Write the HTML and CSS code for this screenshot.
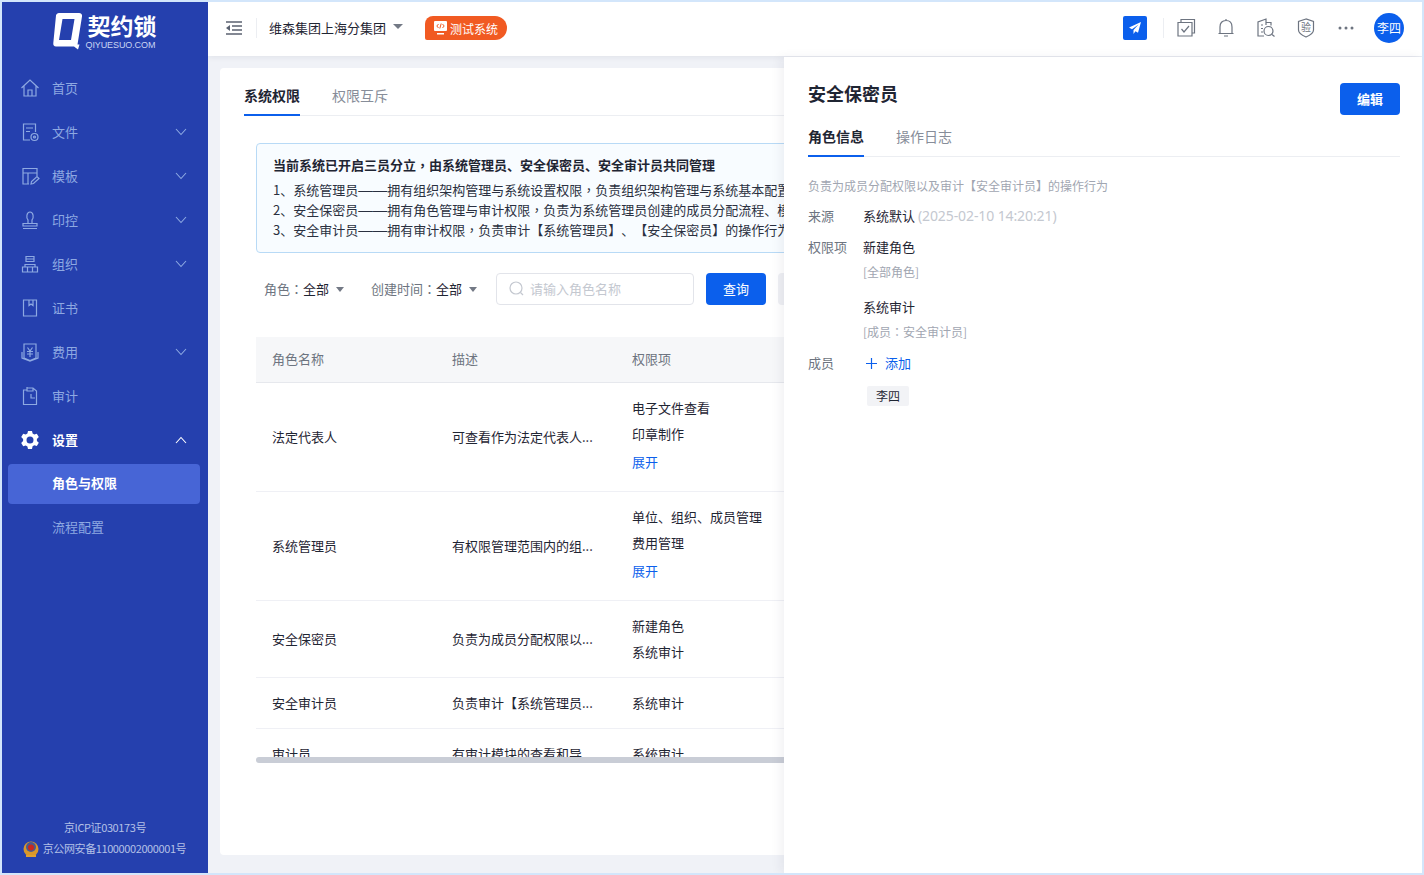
FILE: index.html
```html
<!doctype html>
<html>

<head>
  <meta charset="utf-8">
  <title>契约锁</title>
  <link rel="stylesheet" href="styles.css">
</head>

<body>
  <div class="app">
    <aside class="sidebar">
      <div class="logo">
        <svg class="logo-q" width="30" height="38" viewBox="0 0 30 38">
          <path fill="#fff" fill-rule="evenodd" d="M6 1h20c2 0 3.500 1.500 3 3.500l-4.500 28h2l-1.500 5-4-3H3c-2 0-3-1.500-2.700-3.500L3 3.500C3.300 2 4.500 1 6 1zm3.500 6L6 28h12l3.500-21z" />
        </svg>
        <div class="logo-text">
          <div class="logo-cn">契约锁</div>
          <div class="logo-en">QIYUESUO.COM</div>
        </div>
      </div>
      <nav class="nav">
        <a class="nav-item">
          <svg class="nav-icon" viewBox="0 0 20 20"><path d="M1.500 10 10 2l8.500 8M4 8v10h12V8M8 18v-6h4v6" /></svg>
          <span>首页</span>
        </a>
        <a class="nav-item">
          <svg class="nav-icon" viewBox="0 0 20 20"><path d="M10 18H3.500V2h12v8M6 6h7M6 9.500h4" /><circle cx="14.500" cy="15" r="3.500" /><circle cx="14.500" cy="15" r="1" /></svg>
          <span>文件</span>
          <svg class="chev" viewBox="0 0 12 8"><path d="M1 1l5 5.500L11 1" /></svg>
        </a>
        <a class="nav-item">
          <svg class="nav-icon" viewBox="0 0 20 20"><path d="M9 18H3V2.500h14V10M3 7h14M8 7v11M11 18l.5-2.500 5.500-5 2 2-5.500 5z" /></svg>
          <span>模板</span>
          <svg class="chev" viewBox="0 0 12 8"><path d="M1 1l5 5.500L11 1" /></svg>
        </a>
        <a class="nav-item">
          <svg class="nav-icon" viewBox="0 0 20 20"><path d="M3 13.500h14V16H3zM3 18.500h14M8 13.500V10C6 8 6.500 2 10 2s4 6 2 8v3.500" /></svg>
          <span>印控</span>
          <svg class="chev" viewBox="0 0 12 8"><path d="M1 1l5 5.500L11 1" /></svg>
        </a>
        <a class="nav-item">
          <svg class="nav-icon" viewBox="0 0 20 20"><path d="M6 2.500h8v5H6zM6 5h8M2.500 13h5v5h-5zM12.500 13h5v5h-5zM7.500 13h5v5h-5zM5 13v-2.500h10V13" /></svg>
          <span>组织</span>
          <svg class="chev" viewBox="0 0 12 8"><path d="M1 1l5 5.500L11 1" /></svg>
        </a>
        <a class="nav-item">
          <svg class="nav-icon" viewBox="0 0 20 20"><path d="M3.500 2h13v16h-13zM9 2v5.500l2-1.500 2 1.500V2" /></svg>
          <span>证书</span>
        </a>
        <a class="nav-item">
          <svg class="nav-icon" viewBox="0 0 20 20"><path d="M4 2h12v14l-6 2.500L4 16zM2 10v6l8 3 8-3v-6M7.500 5.500 10 9l2.500-3.500M7 9.500h6M7 12h6M10 9v6" /></svg>
          <span>费用</span>
          <svg class="chev" viewBox="0 0 12 8"><path d="M1 1l5 5.500L11 1" /></svg>
        </a>
        <a class="nav-item">
          <svg class="nav-icon" viewBox="0 0 20 20"><path d="M7 4H3.500v14.500h13V5L13 2H7zM7 1v4h6V2M11 8v4h4" /></svg>
          <span>审计</span>
        </a>
        <a class="nav-item is-open">
          <svg class="nav-icon gear" viewBox="0 0 20 20"><path fill-rule="evenodd" d="M8 1h4l.6 2.500 1.700 1 2.500-.8 2 3.400-1.900 1.800v2l1.900 1.800-2 3.400-2.500-.8-1.700 1L12 19H8l-.6-2.500-1.700-1-2.500.8-2-3.400 1.900-1.800V9L1.200 7.100l2-3.400 2.500.8 1.700-1zM10 6.500a3.500 3.500 0 1 0 0 7 3.500 3.500 0 0 0 0-7z" /></svg>
          <span>设置</span>
          <svg class="chev" viewBox="0 0 12 8"><path d="M1 7l5-5.500L11 7" /></svg>
        </a>
        <a class="sub-item is-active">角色与权限</a>
        <a class="sub-item">流程配置</a>
      </nav>
      <div class="side-foot">
        <div>京ICP证030173号</div>
        <div class="police">
          <svg width="16" height="18" viewBox="0 0 16 18">
            <circle cx="8" cy="9" r="7.500" fill="#d9972b" />
            <circle cx="8" cy="7" r="5" fill="#4a5a8c" />
            <circle cx="8" cy="7.500" r="3" fill="#c8281e" />
            <path d="M3 15h10v2H3z" fill="#e0a030" />
          </svg>
          <span>京公网安备11000002000001号</span>
        </div>
      </div>
    </aside>

    <div class="main">
      <header class="topbar">
        <svg class="menu-icon" width="16" height="14" viewBox="0 0 16 14"><path d="M0 1h16M6 5h10M6 9h10M0 13h16" /><path class="fill" d="M4 4v6L0 7z" /></svg>
        <span class="top-sep"></span>
        <span class="org">维森集团上海分集团</span>
        <span class="caret caret-dark"></span>
        <span class="env-badge">
          <svg width="13" height="14" viewBox="0 0 13 14"><path fill="#fff" d="M1 0h11a1 1 0 0 1 1 1v8a1 1 0 0 1-1 1H1a1 1 0 0 1-1-1V1a1 1 0 0 1 1-1zM3 12h7v1.500H3z" /><path fill="none" stroke="#f15a22" d="M4.500 3 2.800 5l1.700 2M8.500 3l1.700 2-1.700 2M7.200 2.500 5.800 7.500" /></svg>
          测试系统
        </span>
        <div class="top-right">
          <span class="send-btn">
            <svg width="12" height="12" viewBox="0 0 12 12"><path fill="#fff" d="M12 0 0 5.500l3 1.700L9.500 2.500 4.500 8v4l2-2.700 2.500 1.500z" /></svg>
          </span>
          <span class="top-sep"></span>
          <svg class="tool" viewBox="0 0 20 20"><path d="M5 4V1.500h13.500V15H16M2 4.500h14V18H2zM5.500 11l2.500 3 5-6" /></svg>
          <svg class="tool" viewBox="0 0 20 20"><path d="M4 15.500V9c0-4 2-6.500 6-6.500s6 2.500 6 6.500v6.500zM2.500 15.500h15M8 18h4M10 1v1.500" /></svg>
          <svg class="tool" viewBox="0 0 20 20"><path d="M8 18H2V4l8-3v6M10 4.500h5v3M5 7h2M5 10.500h2M5 14h2" /><circle cx="12.500" cy="13" r="4.500" /><path d="m16 16.500 2.500 2" /></svg>
          <span class="shield">
            <svg viewBox="0 0 20 20"><path d="M10 1 2.500 3.500V12c0 3 4 5.500 7.500 7 3.500-1.500 7.500-4 7.500-7V3.500z" /></svg>
            <i>验</i>
          </span>
          <svg class="tool dots" viewBox="0 0 20 20"><circle cx="4" cy="10" r="1.500" /><circle cx="10" cy="10" r="1.500" /><circle cx="16" cy="10" r="1.500" /></svg>
          <span class="avatar">李四</span>
        </div>
      </header>

      <div class="content">
        <section class="card">
          <div class="tabs">
            <a class="tab is-active">系统权限</a>
            <a class="tab">权限互斥</a>
          </div>
          <div class="alert">
            <div class="alert-title">当前系统已开启三员分立<span class="pun">，</span>由系统管理员、安全保密员、安全审计员共同管理</div>
            <div>1、系统管理员<span class="dash">——</span>拥有组织架构管理与系统设置权限<span class="pun">，</span>负责组织架构管理与系统基本配置</div>
            <div>2、安全保密员<span class="dash">——</span>拥有角色管理与审计权限<span class="pun">，</span>负责为系统管理员创建的成员分配流程、模板</div>
            <div>3、安全审计员<span class="dash">——</span>拥有审计权限<span class="pun">，</span>负责审计【系统管理员】、【安全保密员】的操作行为</div>
          </div>
          <div class="filters">
            <span class="filter"><em>角色<span class="pun">：</span></em>全部<span class="caret"></span></span>
            <span class="filter"><em>创建时间<span class="pun">：</span></em>全部<span class="caret"></span></span>
            <span class="search">
              <svg width="15" height="15" viewBox="0 0 15 15"><circle cx="7" cy="7" r="6" /><path d="m11.500 11.500 2.500 2.500" /></svg>
              请输入角色名称
            </span>
            <span class="btn btn-primary">查询</span>
            <span class="btn btn-light">重置</span>
          </div>
          <div class="table-wrap">
            <table class="table">
              <thead>
                <tr>
                  <th>角色名称</th>
                  <th>描述</th>
                  <th>权限项</th>
                </tr>
              </thead>
              <tbody>
                <tr class="row-tall">
                  <td>法定代表人</td>
                  <td>可查看作为法定代表人...</td>
                  <td>
                    <div class="perm">电子文件查看</div>
                    <div class="perm">印章制作</div>
                    <div class="more">展开</div>
                  </td>
                </tr>
                <tr class="row-tall">
                  <td>系统管理员</td>
                  <td>有权限管理范围内的组...</td>
                  <td>
                    <div class="perm">单位、组织、成员管理</div>
                    <div class="perm">费用管理</div>
                    <div class="more">展开</div>
                  </td>
                </tr>
                <tr class="row-mid">
                  <td>安全保密员</td>
                  <td>负责为成员分配权限以...</td>
                  <td>
                    <div class="perm">新建角色</div>
                    <div class="perm">系统审计</div>
                  </td>
                </tr>
                <tr class="row-low">
                  <td>安全审计员</td>
                  <td>负责审计【系统管理员...</td>
                  <td>系统审计</td>
                </tr>
                <tr class="row-low">
                  <td>审计员</td>
                  <td>有审计模块的查看和导...</td>
                  <td>系统审计</td>
                </tr>
              </tbody>
            </table>
            <div class="scrollbar"></div>
          </div>
        </section>
      </div>

      <!-- drawer sits over the page -->
      <aside class="drawer">
        <div class="drawer-head">
          <h2>安全保密员</h2>
          <span class="btn btn-primary btn-edit">编辑</span>
        </div>
        <div class="tabs drawer-tabs">
          <a class="tab is-active">角色信息</a>
          <a class="tab">操作日志</a>
        </div>
        <p class="desc">负责为成员分配权限以及审计【安全审计员】的操作行为</p>
        <div class="info">
          <div class="info-label">来源</div>
          <div>系统默认 <span class="muted">(2025-02-10 14:20:21)</span></div>
          <div class="info-label">权限项</div>
          <div class="perm-list">
            <div>新建角色</div>
            <div class="scope">[全部角色]</div>
            <div class="perm-next">系统审计</div>
            <div class="scope">[成员<span class="pun">：</span>安全审计员]</div>
          </div>
          <div class="info-label">成员</div>
          <div class="members">
            <a class="add">
              <svg width="11" height="11" viewBox="0 0 11 11"><path d="M5.500 0v11M0 5.500h11" /></svg>
              添加
            </a>
            <span class="tag">李四</span>
          </div>
        </div>
      </aside>
    </div>
  </div>
</body>

</html>
```

FILE: styles.css
```css
* {
  box-sizing: border-box;
}

html,
body {
  height: 100%;
  margin: 0;
}

body {
  padding: 2px;
  overflow: hidden;
  background: #d3e6fb;
  font: 13px "Noto Sans CJK SC", "Noto Sans", sans-serif;
  color: #1f2533;
  text-spacing-trim: space-all;
}

/* centred comma and colon, the SC cut puts them low */
.pun {
  font-family: "Noto Sans CJK TC", sans-serif;
}

.dash {
  font-family: "Liberation Sans", sans-serif;
  font-size: 14.500px;
  line-height: 1;
}

.app {
  display: flex;
  height: 100%;
  background: #f0f2f7;
}

/* Sidebar */
.sidebar {
  display: flex;
  flex-direction: column;
  flex: 0 0 206px;
  background: #2540ae;
  color: #8ea9e2;
}

.logo {
  display: flex;
  align-items: center;
  justify-content: center;
  gap: 3px;
  height: 64px;
  padding-right: 1px;
  padding-bottom: 6px;
  color: #fff;
}

.logo-cn {
  padding-left: 2px;
  font-size: 23px;
  font-weight: 700;
  line-height: 26px;
}

.logo-en {
  margin-top: 2px;
  font: 9px/10px "Liberation Sans", sans-serif;
  letter-spacing: -.100px;
  color: #c9d5f3;
}

.nav-item {
  display: flex;
  align-items: center;
  height: 44px;
  padding: 0 21px 0 18px;
}

.nav-item span {
  flex: 1;
  margin-left: 12px;
  padding-bottom: 2px;
}

.nav-icon {
  width: 20px;
  height: 20px;
  fill: none;
  stroke: #8ea9e2;
  stroke-width: 1.200;
}

.chev {
  width: 12px;
  height: 8px;
  fill: none;
  stroke: #8ea9e2;
  stroke-width: 1.100;
}

.nav-item.is-open {
  color: #fff;
  font-weight: 700;
}

.is-open .gear {
  fill: #fff;
  stroke: none;
}

.is-open .chev {
  stroke: #fff;
}

.sub-item {
  display: block;
  height: 40px;
  margin: 0 8px 4px 6px;
  padding-left: 44px;
  line-height: 38px;
  border-radius: 4px;
}

.sub-item.is-active {
  margin-top: 2px;
  background: #4765d6;
  color: #fff;
  font-weight: 700;
}

.side-foot {
  margin-top: auto;
  padding-bottom: 14px;
  font-size: 11px;
  line-height: 21px;
  letter-spacing: -.400px;
  text-align: center;
  color: #b4c0e6;
}

.police {
  display: flex;
  align-items: center;
  justify-content: center;
  gap: 4px;
  padding-right: 1px;
}

/* Top bar */
.main {
  position: relative;
  display: flex;
  flex-direction: column;
  flex: 1;
  min-width: 0;
  overflow: hidden;
}

.topbar {
  display: flex;
  align-items: center;
  flex: 0 0 54px;
  padding: 0 18px 2px 18px;
  background: #fff;
  box-shadow: 0 1px 6px rgba(30, 40, 70, .08);
  z-index: 1;
}

.menu-icon {
  fill: none;
  stroke: #5b6270;
  stroke-width: 1.300;
}

.menu-icon .fill {
  fill: #5b6270;
  stroke: none;
}

.top-sep {
  width: 1px;
  height: 20px;
  margin-left: 14px;
  background: #eceef2;
}

.org {
  margin-left: 12px;
  padding-bottom: 1px;
}

.caret {
  display: inline-block;
  width: 0;
  height: 0;
  border: 4px solid transparent;
  border-top: 5px solid #737985;
  border-bottom: 0;
  margin-left: 7px;
  vertical-align: 2px;
}

.caret-dark {
  margin-top: -4px;
  border-width: 5px 5px 0;
}

.env-badge {
  display: flex;
  align-items: center;
  gap: 3px;
  width: 82px;
  height: 24px;
  margin-left: 22px;
  padding-left: 9px;
  background: #f15a22;
  border-radius: 8px 12px 12px 2px;
  color: #fff;
  font-size: 12px;
}

.top-right {
  display: flex;
  align-items: center;
  margin-left: auto;
}

.top-right .top-sep {
  margin: 0 12px 0 16px;
}

.send-btn {
  display: flex;
  align-items: center;
  justify-content: center;
  width: 24px;
  height: 24px;
  background: #0b5fec;
  border-radius: 2px;
}

.tool,
.shield {
  position: relative;
  width: 20px;
  height: 20px;
  margin-right: 20px;
  fill: none;
  stroke: #6d7480;
  stroke-width: 1.200;
}

.shield svg {
  width: 20px;
  height: 20px;
}

.shield i {
  position: absolute;
  left: 5px;
  top: 1px;
  font: 10px/16px "Noto Sans CJK SC", sans-serif;
  color: #6d7480;
}

.dots {
  fill: #6d7480;
  stroke: none;
  margin-right: 18px;
}

.avatar {
  width: 30px;
  height: 30px;
  border-radius: 50%;
  background: #0b5fec;
  color: #fff;
  font-size: 12px;
  line-height: 30px;
  text-align: center;
}

/* Page card */
.content {
  flex: 1;
  padding: 12px 16px 18px 12px;
  min-height: 0;
}

.card {
  height: 100%;
  padding: 12px 24px;
  background: #fff;
  border-radius: 4px;
  overflow: hidden;
}

.tabs {
  display: flex;
  gap: 32px;
  height: 36px;
  border-bottom: 1px solid #eceef2;
}

.tab {
  height: 36px;
  font-size: 14px;
  line-height: 30px;
  color: #878d99;
}

.tab.is-active {
  border-bottom: 2px solid #0b5fec;
  color: #1f2533;
  font-weight: 700;
}

.alert {
  margin: 27px 0 20px 12px;
  padding: 7px 16px;
  width: 900px;
  height: 110px;
  background: #f8fcff;
  border: 1px solid #b8daf6;
  border-radius: 4px;
  line-height: 20px;
  white-space: nowrap;
  color: #2a3040;
}

.alert-title {
  margin-bottom: 2px;
  line-height: 27px;
  font-weight: 700;
  color: #1f2533;
}

.filters {
  display: flex;
  align-items: center;
  height: 32px;
  margin-left: 20px;
  white-space: nowrap;
}

.filter {
  margin-right: 27px;
  padding-bottom: 2px;
}

.filter + .filter {
  margin-right: 19px;
}

.filter em {
  font-style: normal;
  color: #6d7480;
}

.search {
  display: flex;
  align-items: center;
  gap: 6px;
  width: 198px;
  height: 32px;
  padding-left: 12px;
  padding-bottom: 1px;
  border: 1px solid #e2e4ea;
  border-radius: 4px;
  color: #c4c8d0;
}

.search svg {
  fill: none;
  stroke: #c4c8d0;
  stroke-width: 1.200;
}

.btn {
  flex: none;
  width: 60px;
  height: 32px;
  border-radius: 4px;
  line-height: 31px;
  text-align: center;
}

.btn-primary {
  margin-left: 12px;
  background: #0b5fec;
  color: #fff;
}

.btn-light {
  margin-left: 12px;
  background: #eff0f4;
  color: #6d7480;
}

/* Table */
.table-wrap {
  position: relative;
  width: 900px;
  height: 426px;
  margin: 32px 0 0 12px;
  overflow: hidden;
}

.table {
  width: 900px;
  border-collapse: collapse;
  table-layout: fixed;
}

.table th {
  width: 180px;
  height: 45px;
  padding: 0 16px 1px;
  background: #f6f7f9;
  border-bottom: 1px solid #e6e8ed;
  font-weight: 400;
  text-align: left;
  color: #6d7480;
}

.table th:last-child {
  width: 540px;
}

.table td {
  padding: 0 16px 1px;
  border-bottom: 1px solid #eff0f5;
  white-space: nowrap;
}

.table .row-tall td:last-child {
  padding-bottom: 4px;
}

.table .row-mid td:last-child {
  padding-bottom: 0;
}

.row-tall td {
  height: 109px;
}

.row-mid td {
  height: 77px;
}

.row-low td {
  height: 51px;
}

.perm {
  line-height: 26px;
}

.more {
  margin-top: 2px;
  line-height: 26px;
  color: #0b5fec;
}

.scrollbar {
  position: absolute;
  left: 0;
  right: 0;
  bottom: 0;
  height: 6px;
  background: #c9cdd6;
  border-radius: 3px;
}

/* Drawer */
.drawer {
  position: absolute;
  top: 55px;
  right: 0;
  bottom: 0;
  width: 638px;
  padding: 0 22px 0 24px;
  background: #fff;
  box-shadow: -4px 0 10px rgba(30, 40, 70, .06);
  z-index: 2;
}

.drawer-head {
  display: flex;
  align-items: flex-start;
  justify-content: space-between;
  height: 64px;
}

.drawer-head h2 {
  margin: 23px 0 0;
  font-size: 18px;
  line-height: 26px;
  font-weight: 700;
}

.btn-edit {
  margin-top: 26px;
  font-weight: 700;
}

.drawer-tabs {
  height: 36px;
}

.desc {
  margin: 20px 0 10px;
  font-size: 12px;
  line-height: 18px;
  color: #a1a6b1;
}

.info {
  display: grid;
  grid-template-columns: 55px 1fr;
  row-gap: 9px;
  line-height: 22px;
}

.info-label {
  color: #6d7480;
}

.muted {
  font: 14px "Noto Sans", sans-serif;
  letter-spacing: -.100px;
  color: #c4c8d0;
}

.scope {
  margin-top: 3px;
  font-size: 12px;
  color: #a1a6b1;
}

.perm-next {
  margin-top: 13px;
}

.add {
  display: flex;
  align-items: center;
  gap: 8px;
  padding-left: 3px;
  color: #0b5fec;
}

.add svg {
  fill: none;
  stroke: #0b5fec;
  stroke-width: 1.200;
}

.tag {
  display: block;
  width: 42px;
  height: 20px;
  margin: 12px 0 0 4px;
  background: #f2f3f6;
  border-radius: 2px;
  font-size: 12px;
  line-height: 20px;
  text-align: center;
}
```
